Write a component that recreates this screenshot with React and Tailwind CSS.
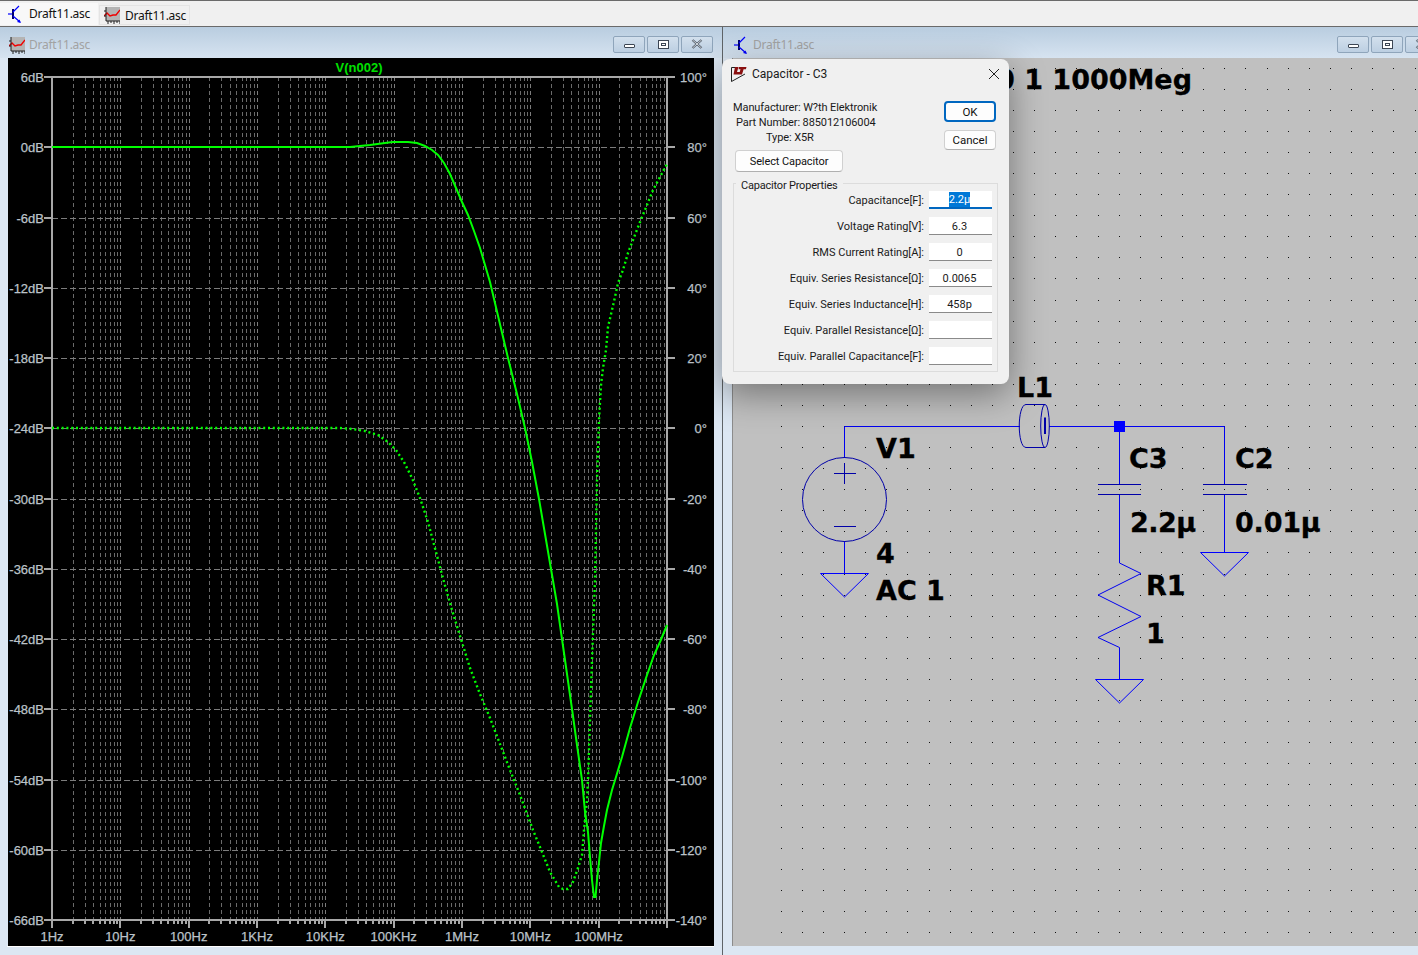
const uiFont = { fontFamily: '"Noto Sans", "Open Sans", sans-serif' };
const dialogFont = { fontFamily: 'Roboto, "Noto Sans", sans-serif' };

const LEFT = 52;
const RIGHT = 667;
const TOP = 77;
const BOTTOM = 920;
const DECADE = (RIGHT - LEFT) / 9;
const ROW = (BOTTOM - TOP) / 12;

const dbLabels = ["6dB", "0dB", "-6dB", "-12dB", "-18dB", "-24dB", "-30dB", "-36dB", "-42dB", "-48dB", "-54dB", "-60dB", "-66dB"];
const phaseLabels = ["100°", "80°", "60°", "40°", "20°", "0°", "-20°", "-40°", "-60°", "-80°", "-100°", "-120°", "-140°"];
const freqLabels = ["1Hz", "10Hz", "100Hz", "1KHz", "10KHz", "100KHz", "1MHz", "10MHz", "100MHz"];

const magnitude = "52,147 350,147 370,145 385,143 393,142 408,142 417,143 425,146 432,150 438,155 444,163 450,174 456,188 462,202 468,215 474,231 480,248 490,282 499,320 508,358 517,394 525,428 532,462 539,499 545,534 551,569 557,604 562,639 567,674 572,709 577,745 582,780 585,812 588,832 590,857 592,880 594,897 595.5,897 597,880 599,862 601,843 604,826 607,810 612,790 616,777 622,757 630,728 638,702 646,678 654,655 660,642 667,625";
const phase = "52,428 340,428 352,429 365,431 378,435 388,442 396,450 404,462 412,478 420,498 428,522 436,552 444,582 452,610 460,636 470,668 480,694 490,718 500,744 510,770 520,795 533,830 542,852 550,872 559,887 563,889 568,889 573,882 578,868 582,855 584,830 587,800 588,780 590,720 592,660 595,580 597,480 599,420 601,385 603,368 606,350 608,327 612,310 615,297 618,283 623,270 628,253 633,240 640,222 647,205 653,190 660,177 667,164";

const gridX = [];
const minorX = [];
for (let d = 0; d < 9; d++) {
  for (let n = 2; n <= 9; n++) minorX.push(Math.round(LEFT + DECADE * d + DECADE * Math.log10(n)));
  if (d > 0) gridX.push(Math.round(LEFT + DECADE * d));
}

const dots = [];
for (let c = -3; c < 30; c++) {
  for (let r = -18; r < 25; r++) {
    dots.push([Math.round(844 + c * 21.13), Math.round(426 + r * 21.08)]);
  }
}

function TransistorIcon() {
  return (
    <svg width="14" height="18" viewBox="0 0 14 18" className="shrink-0">
      <path d="M0 9h4" stroke="#0000ff" strokeWidth="1.2" fill="none" />
      <path d="M5 4v10" stroke="#00006a" strokeWidth="2" fill="none" />
      <path d="M5 7 11 1M5 11l7 6" stroke="#0000ff" strokeWidth="1.2" fill="none" />
      <path d="M13 18l-4-1 2.5-2.5z" fill="#0000ff" />
    </svg>
  );
}

function PlotIcon() {
  return (
    <svg width="16" height="17" viewBox="0 0 16 17" className="shrink-0">
      <rect x="2" y="0" width="14" height="14" fill="#b4b4b4" />
      <path d="M0 9 3 6l3 3 3-1 3 0 4-5" stroke="#f00000" strokeWidth="1.4" fill="none" />
      <path d="M2 0v14h14" stroke="#202020" strokeWidth="1" fill="none" />
      <path d="M0 4h2M0 9h2M4 14v3M7 14v2M10 14v3M13 14v2M16 14v3" stroke="#202020" strokeWidth="1" fill="none" />
    </svg>
  );
}

function LtLogo() {
  return (
    <svg width="17" height="17" viewBox="0 0 17 17" className="shrink-0">
      <path d="M1.500 1.500v14L15 8" stroke="#222" strokeWidth="1" fill="none" />
      <path d="M1.500 1.500H6" stroke="#222" strokeWidth="1" fill="none" />
      <path d="M5 1h3.500L7 6h3l-.7 2.500H3.500zM9 1h7.500l-.6 2.200h-2.300L12 8.500H9l1.500-5.300H8.500z" fill="#8a1010" />
    </svg>
  );
}

function WinButton({ kind }) {
  return (
    <div className="flex h-[17px] w-[32px] shrink-0 items-center justify-center rounded-[2px] border border-[#8fa5bb] bg-gradient-to-b from-[#d3e0ed] to-[#bccfe2]">
      {kind === "min" && <div className="mt-[3px] h-[4px] w-[11px] rounded-[1px] border border-[#3c4654] bg-white" />}
      {kind === "max" && (
        <div className="flex h-[9px] w-[11px] items-center justify-center border border-[#3c4654] bg-white">
          <div className="h-[3px] w-[5px] border border-[#3c4654]" />
        </div>
      )}
      {kind === "close" && (
        <svg width="12" height="10" viewBox="0 0 12 10">
          <path d="M1.500 1 10.500 9M10.500 1 1.500 9" stroke="#4a5564" strokeWidth="2.200" fill="none" />
          <path d="M1.500 1 10.500 9M10.500 1 1.500 9" stroke="#f4f6f8" strokeWidth="0.8" fill="none" />
        </svg>
      )}
    </div>
  );
}

function TitleBar({ icon, pad, gap }) {
  return (
    <div className={`flex h-[31px] shrink-0 items-center bg-gradient-to-b from-[#b9cde0] to-[#d6e3f0] pt-[5px] ${pad}`} style={uiFont}>
      {icon}
      <span className={`${gap} text-[12px] tracking-[-0.25px] text-[#a2a2a2]`}>Draft11.asc</span>
      <div className="ml-auto flex gap-[2px] pb-[2px]">
        <WinButton kind="min" />
        <WinButton kind="max" />
        <WinButton kind="close" />
      </div>
    </div>
  );
}

function PlotPane() {
  return (
    <svg width="706" height="888" viewBox="8 58 706 888" className="block bg-black" style={{ fontFamily: '"Liberation Sans", sans-serif' }}>
      <g stroke="#7c7c7c" strokeWidth="1" strokeDasharray="4 3" fill="none">
        {minorX.map((x) => (
          <path key={x} d={`M${x + 0.5} ${TOP}V${BOTTOM}`} strokeOpacity="0.85" />
        ))}
        {gridX.map((x) => (
          <path key={x} d={`M${x + 0.5} ${TOP}V${BOTTOM}`} />
        ))}
        {dbLabels.slice(1, 12).map((l, i) => (
          <path key={l} d={`M${LEFT} ${Math.round(TOP + ROW * (i + 1)) + 0.5}H${RIGHT}`} strokeDasharray="6 3" />
        ))}
      </g>
      <g stroke="#a8a8a8" strokeWidth="2" fill="none">
        <path d={`M${LEFT} ${TOP}H${RIGHT}V${BOTTOM}H${LEFT}Z`} />
        {dbLabels.map((l, i) => (
          <path key={l} d={`M44 ${Math.round(TOP + ROW * i)}H${LEFT}M${RIGHT} ${Math.round(TOP + ROW * i)}H675`} />
        ))}
        {minorX.map((x) => (
          <path key={x} d={`M${x} ${BOTTOM}v4`} />
        ))}
        {gridX.concat([LEFT, RIGHT]).map((x) => (
          <path key={x} d={`M${x} ${BOTTOM}v8`} />
        ))}
      </g>
      <polyline points={magnitude} fill="none" stroke="#00ff00" strokeWidth="2" />
      <polyline points={phase} fill="none" stroke="#00ff00" strokeWidth="2.400" strokeDasharray="2 2.800" />
      <g fill="#bcc3c9" stroke="#bcc3c9" strokeWidth="0.25" fontSize="13">
        {dbLabels.map((l, i) => (
          <text key={l} x="44" y={TOP + ROW * i + 5} textAnchor="end">{l}</text>
        ))}
        {phaseLabels.map((l, i) => (
          <text key={l} x="707" y={TOP + ROW * i + 5} textAnchor="end">{l}</text>
        ))}
        {freqLabels.map((l, i) => (
          <text key={l} x={LEFT + DECADE * i} y="941" textAnchor="middle">{l}</text>
        ))}
      </g>
      <text x="359" y="72" textAnchor="middle" fontSize="13" fontWeight="700" fill="#00e000">V(n002)</text>
    </svg>
  );
}

function Ground({ x, y }) {
  return <path d={`M${x - 23.500} ${y + 0.500}H${x + 24.500}L${x + 0.500} ${y + 24}Z`} stroke="#0000ff" fill="none" />;
}

function SchematicPane() {
  return (
    <svg width="685" height="888" viewBox="733 58 685 888" className="block bg-[#c0c0c0]" style={{ fontFamily: '"DejaVu Sans", sans-serif' }}>
      {dots.map(([x, y]) => (
        <rect key={`${x}-${y}`} x={x} y={y} width="1" height="1" fill="#101010" />
      ))}
      <g fill="none" stroke="#0000f0" strokeWidth="1">
        <path d="M844.500 458V426.500H1020M1049 426.500H1224.500V484M1119.500 426.500V484M1119.500 494V563L1141 573.500 1098 595 1141 616.500 1098 637.500 1119.500 647.500V679M1224.500 494V552M844.500 541V573" />
      </g>
      <g fill="none" stroke="#0000a8" strokeWidth="1">
        <circle cx="844.500" cy="499.500" r="42" />
        <path d="M834 473.500H856M844.500 463V484M834 526.500H856" />
        <path d="M1098 484.500H1141M1098 494.500H1141M1203 484.500H1247M1203 494.500H1247" />
        <path d="M1045 404.500H1026C1017 404.500 1017 447.500 1026 447.500H1045" />
        <ellipse cx="1045" cy="426" rx="4.300" ry="21.500" />
      </g>
      <path d="M1045 417.500V434" stroke="#0000a8" strokeWidth="2" />
      <Ground x={844} y={573} />
      <Ground x={1119} y={679} />
      <Ground x={1224} y={552} />
      <rect x="1114" y="421" width="11" height="11" fill="#0000ff" />
      <g fill="#000" stroke="#000" strokeWidth="0.3" fontSize="27" fontWeight="700">
        <text x="1192" y="89" textAnchor="end">.ac dec 1000 1 1000Meg</text>
        <text x="1017" y="397">L1</text>
        <text x="876" y="458">V1</text>
        <text x="1129" y="468">C3</text>
        <text x="1235" y="468">C2</text>
        <text x="1130" y="532" letterSpacing="-0.5">2.2µ</text>
        <text x="1235" y="532" letterSpacing="-0.2">0.01µ</text>
        <text x="1146" y="595">R1</text>
        <text x="1146" y="643">1</text>
        <text x="876" y="563">4</text>
        <text x="876" y="600">AC 1</text>
      </g>
    </svg>
  );
}

const rows = [
  { label: "Capacitance[F]:", value: "2.2µ", focus: true },
  { label: "Voltage Rating[V]:", value: "6.3" },
  { label: "RMS Current Rating[A]:", value: "0" },
  { label: "Equiv. Series Resistance[Ω]:", value: "0.0065" },
  { label: "Equiv. Series Inductance[H]:", value: "458p" },
  { label: "Equiv. Parallel Resistance[Ω]:", value: "" },
  { label: "Equiv. Parallel Capacitance[F]:", value: "" },
];

function DialogButton({ children, primary, className }) {
  return (
    <div
      className={`flex items-center justify-center rounded-[4px] bg-[#fdfdfd] text-[#111] ${
        primary ? "border-2 border-[#0067c0]" : "border border-[#d0d0d0] border-b-[#b0b0b0]"
      } ${className}`}
    >
      {children}
    </div>
  );
}

function CapacitorDialog() {
  return (
    <div
      className="absolute left-[722px] top-[59px] h-[325px] w-[287px] rounded-[8px] bg-[#f0f0f0] text-[11px] leading-[15px] text-[#1a1a1a] shadow-[0_10px_36px_rgba(0,0,0,0.4)]"
      style={dialogFont}
    >
      <div className="flex h-[29px] items-center pl-[8px] pr-[9px] pt-[1px] text-[12px]">
        <LtLogo />
        <span className="ml-[5px]">Capacitor - C3</span>
        <svg width="12" height="12" viewBox="0 0 12 12" className="ml-auto">
          <path d="M1 1l10 10M11 1 1 11" stroke="#222" strokeWidth="1" fill="none" />
        </svg>
      </div>
      <div className="flex justify-between pl-[11px] pr-[13px] pt-[12px]">
        <div className="tracking-[-0.1px]">
          <div>Manufacturer: W?th Elektronik</div>
          <div className="pl-[3px]">Part Number: 885012106004</div>
          <div className="pl-[33px]">Type: X5R</div>
          <DialogButton className="ml-[2px] mt-[5px] h-[22px] w-[108px] pt-[1px]">Select Capacitor</DialogButton>
        </div>
        <div className="-mt-[1px] flex flex-col gap-[8px] pt-[2px] text-[11.5px]">
          <DialogButton primary className="h-[21px] w-[52px] pt-[1px]">OK</DialogButton>
          <DialogButton className="h-[20px] w-[52px] pt-[1px]">Cancel</DialogButton>
        </div>
      </div>
      <div className="relative mx-[11px] mt-[11px] flex h-[189px] flex-col gap-[8px] border border-[#dcdcdc] pr-[5px] pt-[7px]">
        <span className="absolute -top-[6px] left-[2px] bg-[#f0f0f0] px-[5px] tracking-[-0.2px]">Capacitor Properties</span>
        {rows.map((r) => (
          <div key={r.label} className="flex h-[18px] items-center justify-end gap-[5px]">
            <span className="pt-[1px]">{r.label}</span>
            <div
              className={`flex h-[18px] w-[63px] items-center justify-center bg-white pr-[2px] pt-[1px] ${
                r.focus ? "border-b-2 border-[#0067c0]" : "border-b border-[#8a8a8a]"
              }`}
            >
              {r.focus ? <span className="bg-[#0078d7] text-white">{r.value}</span> : r.value}
            </div>
          </div>
        ))}
      </div>
    </div>
  );
}

export default function App() {
  return (
    <div className="relative flex h-[955px] w-[1418px] flex-col overflow-hidden bg-[#dce7f3]">
      <div className="flex h-[27px] shrink-0 items-end border-y border-y-[#6a6a6a] bg-[#f0f0f0] pb-[1px] text-[12px] tracking-[-0.25px] text-[#111]" style={uiFont}>
        <div className="flex h-[22px] w-[98px] items-center gap-[7px] bg-[#f8f8f8] pl-[8px]">
          <TransistorIcon />
          <span>Draft11.asc</span>
        </div>
        <div className="ml-[1px] flex h-[20px] w-[91px] items-center gap-[5px] border border-[#e4e4e4] pl-[4px] pt-[1px]">
          <PlotIcon />
          <span>Draft11.asc</span>
        </div>
      </div>
      <div className="flex min-h-0 flex-1">
        <div className="flex w-[723px] shrink-0 flex-col border-r border-r-[#5f6468]">
          <TitleBar icon={<PlotIcon />} pad="pl-[9px] pr-[9px]" gap="ml-[4px]" />
          <div className="ml-[8px] w-[706px]">
            <PlotPane />
          </div>
          <div className="ml-[7px] h-[1px] w-[707px] bg-white" />
        </div>
        <div className="flex min-w-0 flex-1 flex-col">
          <div className="w-[725px]">
            <TitleBar icon={<TransistorIcon />} pad="pl-[11px] pr-[11px]" gap="ml-[5px]" />
          </div>
          <div className="ml-[9px] border-l border-l-[#8c8c8c]">
            <SchematicPane />
          </div>
        </div>
      </div>
      <CapacitorDialog />
    </div>
  );
}
